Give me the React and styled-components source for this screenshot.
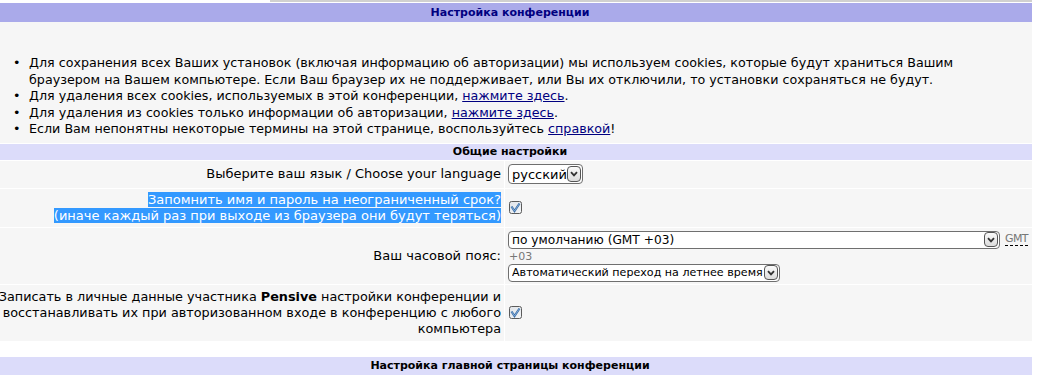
import React from 'react';
import styled, { createGlobalStyle } from 'styled-components';

const GlobalStyle = createGlobalStyle`
  html, body {
    margin: 0;
    padding: 0;
    background: #fff;
    overflow: hidden;
  }
  body {
    font-family: Verdana, "DejaVu Sans", sans-serif;
    font-size: 13px;
    color: #000;
  }
`;

const Page = styled.div`
  width: 1044px;
  margin-left: -12px;
`;

const TopEdge = styled.div`
  height: 3px;
  background: linear-gradient(
    to right,
    transparent 0,
    transparent 282px,
    #d0d0d0 282px
  );
  background-size: 100% 2px;
  background-repeat: no-repeat;
`;

const MainHeader = styled.div`
  background: #aaaaea;
  height: 19px;
  line-height: 19px;
  text-align: center;
  font-weight: bold;
  font-size: 11px;
  color: #000080;
`;

const SectionHeader = styled.div`
  background: #dcdcfa;
  height: ${p => p.h || 16}px;
  line-height: ${p => p.h || 16}px;
  text-align: center;
  font-weight: bold;
  font-size: 11px;
  color: #000;
`;

const Info = styled.div`
  background: #f6f6f6;
  padding: 33px 0 5px;
  margin-bottom: 1px;
`;

const List = styled.ul`
  margin: 0;
  padding: 0 24px 0 41px;
  font-size: 12.7px;
  line-height: 16.6px;
  list-style: none;

  li::before {
    content: '•';
    display: inline-block;
    width: 16px;
    margin-left: -16px;
  }
`;

const Link = styled.a`
  color: #000080;
  text-decoration: underline;
`;

const Table = styled.div`
  display: grid;
  grid-template-columns: 516px 1fr;
  column-gap: 1px;
  row-gap: 1px;
  padding-top: 1px;
`;

const Label = styled.div`
  background: #f6f6f6;
  padding: ${p => p.pad || '3px 3px'};
  font-size: ${p => p.fs || 13}px;
  line-height: 16px;
  min-height: ${p => p.h}px;
  box-sizing: border-box;
  display: flex;
  align-items: center;
  justify-content: flex-end;
`;

const LabelText = styled.div`
  text-align: right;
`;

const Value = styled.div`
  background: #f6f6f6;
  padding: ${p => p.pad || '3px 3px'};
  display: flex;
  flex-direction: ${p => (p.column ? 'column' : 'row')};
  align-items: ${p => (p.column ? 'flex-start' : 'center')};
  box-sizing: border-box;
`;

const Selected = styled.span`
  background: #3399ff;
  color: #fff;
`;

const SelectBox = styled.div`
  display: inline-flex;
  align-items: center;
  justify-content: space-between;
  box-sizing: border-box;
  width: ${p => p.w}px;
  height: ${p => p.h || 18}px;
  border: 1px solid #6f6f6f;
  border-radius: 4px;
  background: #fff;
  padding: 0 1px 0 3px;
  font-size: ${p => p.fs || 12.2}px;
  white-space: nowrap;
`;

const SelectText = styled.span`
  flex: 1 1 auto;
  min-width: 0;
  overflow: hidden;
`;

const SelectButton = styled.span`
  flex: none;
  width: 14px;
  height: ${p => p.h || 14}px;
  border: 1px solid #555;
  border-radius: 4px;
  background: linear-gradient(#fafafa, #dcdcdc);
  display: flex;
  align-items: center;
  justify-content: center;
  box-sizing: border-box;
`;

const TzLine = styled.div`
  display: flex;
  align-items: center;
  gap: 5px;
`;

const Gmt = styled.abbr`
  font-size: 11px;
  color: #777;
  text-decoration: none;
  border-bottom: 1px dashed #000;
  line-height: 12px;
  letter-spacing: -0.6px;
`;

const Offset = styled.div`
  font-size: 11px;
  color: #777;
  line-height: 15px;
  padding-left: 1px;
`;

const Gap = styled.div`
  height: 16px;
`;

const Chevron = () => (
  <svg width="8" height="6" viewBox="0 0 8 6">
    <path d="M1 1.2 L4 4.4 L7 1.2" fill="none" stroke="#333" strokeWidth="1.8" />
  </svg>
);

const Select = ({ w, h, bh, fs, children }) => (
  <SelectBox w={w} h={h} fs={fs}>
    <SelectText>{children}</SelectText>
    <SelectButton h={bh}>
      <Chevron />
    </SelectButton>
  </SelectBox>
);

const Checkbox = () => (
  <svg width="13" height="13" viewBox="0 0 13 13" style={{ marginLeft: '1px' }}>
    <defs>
      <linearGradient id="cbg" x1="0" y1="0" x2="1" y2="1">
        <stop offset="0" stopColor="#dfe3e8" />
        <stop offset="1" stopColor="#f4f6f8" />
      </linearGradient>
    </defs>
    <rect x="0.5" y="0.5" width="12" height="12" rx="2" fill="url(#cbg)" stroke="#5b5b5b" />
    <path d="M2.5 5.5 L5.5 10 L10.5 2.5" fill="none" stroke="#3b6ea5" strokeWidth="2.2" />
    <path d="M2.5 5.5 L5.5 10 L10.5 2.5" fill="none" stroke="#8bb3e0" strokeWidth="0.8" />
  </svg>
);

export default function App() {
  return (
    <>
      <GlobalStyle />
      <Page>
        <TopEdge />
        <MainHeader>Настройка конференции</MainHeader>
        <Info>
          <List>
            <li>
              Для сохранения всех Ваших установок (включая информацию об авторизации) мы используем
              cookies, которые будут храниться Вашим браузером на Вашем компьютере. Если Ваш браузер
              их не поддерживает, или Вы их отключили, то установки сохраняться не будут.
            </li>
            <li>
              Для удаления всех cookies, используемых в этой конференции, <Link href="#">нажмите здесь</Link>.
            </li>
            <li>
              Для удаления из cookies только информации об авторизации, <Link href="#">нажмите здесь</Link>.
            </li>
            <li>
              Если Вам непонятны некоторые термины на этой странице, воспользуйтесь{' '}
              <Link href="#">справкой</Link>!
            </li>
          </List>
        </Info>
        <SectionHeader>Общие настройки</SectionHeader>
        <Table>
          <Label h={27}>
            <LabelText>Выберите ваш язык / Choose your language</LabelText>
          </Label>
          <Value>
            <Select w={75} h={20} bh={16} fs={13}>русский</Select>
          </Value>

          <Label h={38}>
            <LabelText>
              <Selected>
                Запомнить имя и пароль на неограниченный срок?
                <br />
                (иначе каждый раз при выходе из браузера они будут теряться)
              </Selected>
            </LabelText>
          </Label>
          <Value>
            <Checkbox />
          </Value>

          <Label h={56}>
            <LabelText>Ваш часовой пояс:</LabelText>
          </Label>
          <Value column pad="3px 3px 2px">
            <TzLine>
              <Select w={492} h={18} bh={15}>по умолчанию (GMT +03)</Select>
              <Gmt title="Greenwich Mean Time">GMT</Gmt>
            </TzLine>
            <Offset>+03</Offset>
            <Select w={272} h={18} bh={15} fs={11.1}>Автоматический переход на летнее время</Select>
          </Value>

          <Label h={55} pad="4px 3px 4px 0" fs={12.8}>
            <LabelText>
              Записать в личные данные участника <b>Pensive</b> настройки конференции и
              восстанавливать их при авторизованном входе в конференцию с любого компьютера
            </LabelText>
          </Label>
          <Value>
            <Checkbox />
          </Value>
        </Table>
        <Gap />
        <SectionHeader h={18}>Настройка главной страницы конференции</SectionHeader>
      </Page>
    </>
  );
}
